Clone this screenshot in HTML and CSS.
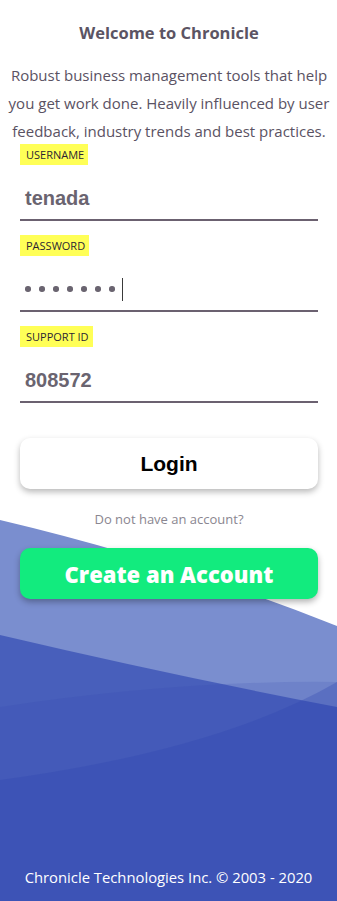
FILE: index.html
```html
<!DOCTYPE html>
<html lang="en">
<head>
<meta charset="utf-8">
<title>Chronicle Login</title>
<link rel="stylesheet" href="styles.css">
</head>
<body>
<div class="page">
  <svg class="bg" viewBox="0 0 337 901" preserveAspectRatio="none" aria-hidden="true">
    <path d="M0 520 Q170 560 337 626 L337 901 L0 901 Z" fill="#7a8ecf"/>
    <path d="M0 635 Q170 675 337 707 L337 901 L0 901 Z" fill="#2f47b0" fill-opacity="0.66"/>
    <path d="M0 707 Q180 680 337 682 L337 901 L0 901 Z" fill="#2f47b0" fill-opacity="0.16"/>
    <path d="M0 780 Q220 750 337 682 L337 901 L0 901 Z" fill="#2f47b0" fill-opacity="0.3"/>
  </svg>
  <main class="content">
    <h1 class="title">Welcome to Chronicle</h1>
    <p class="intro">Robust business management tools that help you get work done. Heavily influenced by user feedback, industry trends and best practices.</p>
    <form class="form">
      <div class="field">
        <span class="label">USERNAME</span>
        <div class="value">tenada</div>
      </div>
      <div class="field">
        <span class="label">PASSWORD</span>
        <div class="value">
          <span class="dots"><i></i><i></i><i></i><i></i><i></i><i></i><i></i></span>
          <span class="caret"></span>
        </div>
      </div>
      <div class="field">
        <span class="label">SUPPORT ID</span>
        <div class="value">808572</div>
      </div>
      <button type="button" class="btn btn-login">Login</button>
      <p class="hint">Do not have an account?</p>
      <button type="button" class="btn btn-create">Create an Account</button>
    </form>
  </main>
  <footer class="footer">Chronicle Technologies Inc. © 2003 - 2020</footer>
</div>
</body>
</html>
```
FILE: styles.css
```css
* { box-sizing: border-box; }
html, body { margin: 0; padding: 0; }
body {
  background: #ffffff;
  font-family: "Open Sans", "Noto Sans", sans-serif;
  color: #5a5263;
}
.page {
  position: relative;
  width: 337px;
  height: 901px;
  overflow: hidden;
  display: flex;
  flex-direction: column;
}
.bg {
  position: absolute;
  left: 0;
  top: 0;
  width: 337px;
  height: 901px;
  z-index: 0;
}
.content {
  position: relative;
  z-index: 1;
  padding: 0 19px 0 20px;
  flex: 1;
}
.title {
  margin: 23px 0 0;
  font-size: 16.5px;
  line-height: 20px;
  font-weight: 700;
  text-align: center;
  color: #5b5463;
}
.intro {
  margin: 18px -13px 0;
  font-size: 15px;
  line-height: 28px;
  text-align: center;
  color: #5a5263;
}
.form {
  display: flex;
  flex-direction: column;
  margin-top: -1px;
}
.field {
  display: flex;
  flex-direction: column;
  align-items: flex-start;
  margin-bottom: 14px;
}
.label {
  background: #ffff57;
  color: #2b1f33;
  font-size: 11px;
  line-height: 15px;
  padding: 3px 4px 3px 6px;
}
.value {
  align-self: stretch;
  margin-top: 7px;
  height: 49px;
  border-bottom: 2px solid #6b6170;
  padding: 5px 5px 0;
  font-family: "Liberation Sans", Arial, sans-serif;
  font-weight: 700;
  font-size: 20px;
  line-height: 24px;
  color: #6a6470;
  display: flex;
  align-items: center;
}
.dots {
  display: flex;
  gap: 8.5px;
  align-items: center;
}
.dots i {
  display: block;
  width: 5.5px;
  height: 5.5px;
  border-radius: 50%;
  background: #6a6470;
}
.caret {
  display: block;
  width: 1px;
  height: 23px;
  background: #3a3a3a;
  margin-left: 7px;
}
.btn {
  display: flex;
  align-items: center;
  justify-content: center;
  width: 100%;
  border: none;
  border-radius: 10px;
  height: 51px;
  cursor: pointer;
  padding: 0;
}
.btn-login {
  margin-top: 21px;
  background: #ffffff;
  color: #000;
  font-family: "Liberation Sans", Arial, sans-serif;
  font-weight: 700;
  font-size: 21px;
  box-shadow: 0 3px 6px rgba(0,0,0,0.28);
}
.hint {
  margin: 22px 0 0;
  text-align: center;
  font-size: 13px;
  line-height: 16px;
  color: #8a8690;
}
.btn-create {
  margin-top: 21px;
  background: #12eb7e;
  color: #fff;
  font-family: "Open Sans", sans-serif;
  font-weight: 800;
  font-size: 22px;
  box-shadow: 0 3px 6px rgba(0,0,0,0.3);
}
.footer {
  position: relative;
  z-index: 1;
  text-align: center;
  color: #fff;
  font-size: 14.8px;
  line-height: 18px;
  padding-bottom: 15px;
}
```
